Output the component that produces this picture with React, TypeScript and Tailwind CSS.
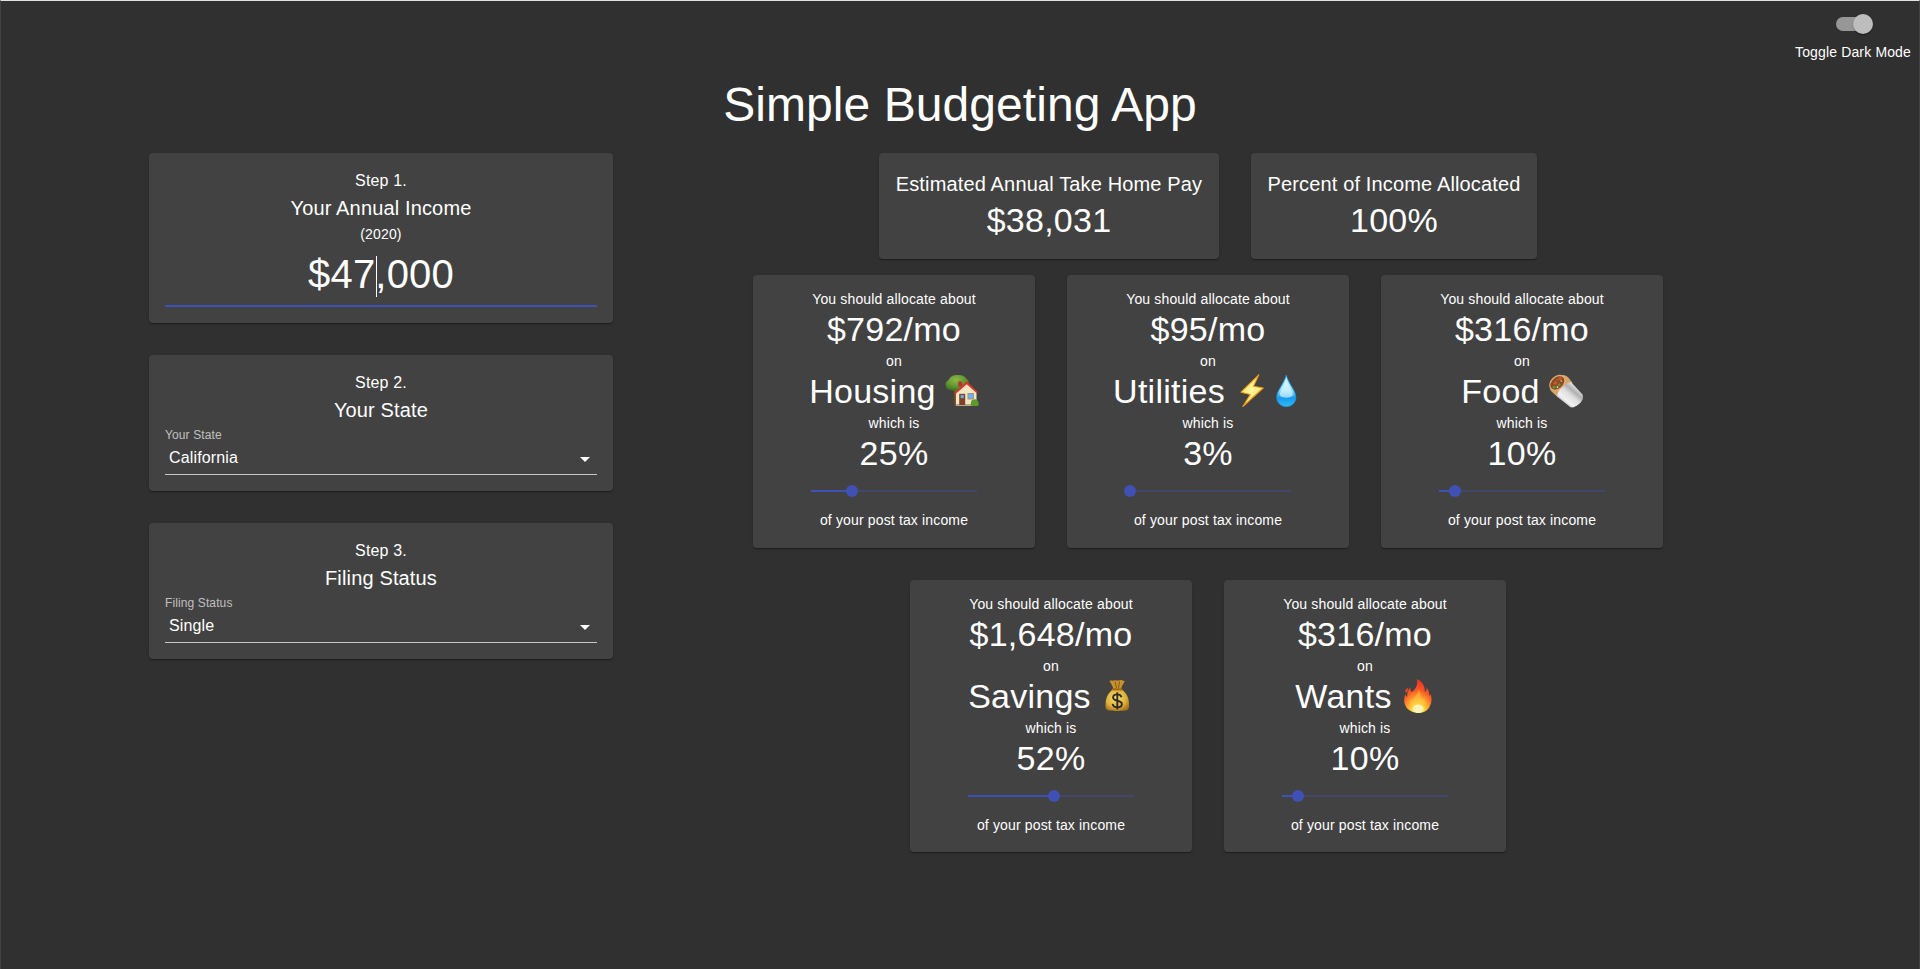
import type { ReactNode } from "react";

const card =
  "rounded bg-[#424242] shadow-[0_2px_1px_-1px_rgba(0,0,0,0.2),0_1px_1px_0_rgba(0,0,0,0.14),0_1px_3px_0_rgba(0,0,0,0.12)]";

const emojiClass = "ml-[9px] h-[34px] w-[34px] shrink-0";

function House() {
  return (
    <svg viewBox="0 0 34 34" className={emojiClass}>
      <defs>
        <radialGradient id="tree" cx="0.45" cy="0.3" r="0.7">
          <stop offset="0" stopColor="#8fb84a" />
          <stop offset="0.6" stopColor="#5f9430" />
          <stop offset="1" stopColor="#3b6b1c" />
        </radialGradient>
      </defs>
      <path d="M9 15h3.5v17H9.5z" fill="#7a5526" />
      <path d="M.6 11C.4 8 2.500 7 4 5.200 5.500 2 9 .8 12 1c4-.5 8 .8 9.600 4 2.400 1 2.600 4 1.600 6l-11 5.500C10 18 8 17 6.500 16 3 16.500.8 14 .6 11z" fill="url(#tree)" />
      <path d="M13.300 7.500h3.800v5h-3.800z" fill="#b5362c" />
      <path d="M11 17.500 21.700 8.500 31.500 17.500V31.500H11z" fill="#f4e6c3" />
      <path d="M11 30h20v2H11z" fill="#b9a98c" />
      <path d="M9.500 18.800 21.700 7.300 33 18.300l-1.200 1L21.700 10.200 10.600 20z" fill="#d8322b" />
      <path d="M14.200 19.800h6v11.200h-6z" fill="#7d4228" />
      <path d="M15.600 21h3.200v3.200h-3.200z" fill="#63aee8" />
      <path d="M22.500 19h6.500v6.500h-6.500z" fill="#b98b5e" />
      <path d="M23.300 19.800h5v4.700h-5z" fill="#69b5f2" />
      <path d="M26 29c-.5-2 1.200-3.500 2.500-3.300 1.800-1.200 4.300 0 4.500 2 1.500 1.500.8 4-.8 4.300h-5c-1.500-.3-2-1.800-1.200-3z" fill="#5f9a2c" />
    </svg>
  );
}

function Bolt() {
  return (
    <svg viewBox="0 0 34 34" className="ml-[10px] h-[34px] w-[34px] shrink-0">
      <defs>
        <linearGradient id="bolt" x1="0" y1="0" x2="1" y2="1">
          <stop offset="0" stopColor="#ffe14a" />
          <stop offset="0.5" stopColor="#fff6a0" />
          <stop offset="1" stopColor="#ffc928" />
        </linearGradient>
      </defs>
      <path d="M23.800 .8 6 18.200 15.300 20.500 7.800 32.500 28.200 14 18.500 12.300z" fill="url(#bolt)" stroke="#f39a12" strokeWidth="1.100" strokeLinejoin="round" />
    </svg>
  );
}

function Drop() {
  return (
    <svg viewBox="0 0 34 34" className="h-[34px] w-[34px] shrink-0">
      <defs>
        <linearGradient id="drop" x1="0" y1="0" x2="0" y2="1">
          <stop offset="0" stopColor="#d6f6ff" />
          <stop offset="0.5" stopColor="#8edcfb" />
          <stop offset="0.72" stopColor="#1698ee" />
          <stop offset="1" stopColor="#2fbcf8" />
        </linearGradient>
      </defs>
      <path d="M17.300 1.200C15.500 9 7.800 16.500 7.800 23.300c0 5.300 4.200 9.300 9.500 9.300s9.500-4 9.500-9.300C26.800 16.500 19 9 17.300 1.200z" fill="url(#drop)" stroke="#14a0ee" strokeWidth=".8" />
      <path d="M17.300 5c-1.500 6-6 11-6.500 16 1 3.500 12 3.500 13 0C23.300 16 18.800 11 17.300 5z" fill="#e6faff" opacity=".6" />
    </svg>
  );
}

function Burrito() {
  return (
    <svg viewBox="0 0 34 34" className={emojiClass}>
      <defs>
        <linearGradient id="foil" x1="0.2" y1="0.9" x2="0.8" y2="0.2">
          <stop offset="0" stopColor="#a2a2a2" />
          <stop offset="0.25" stopColor="#f1f1f1" />
          <stop offset="0.55" stopColor="#dedede" />
          <stop offset="0.75" stopColor="#b0b0b0" />
          <stop offset="1" stopColor="#e6e6e6" />
        </linearGradient>
      </defs>
      <path d="M1 12 12 1.500c2-1.200 5-.3 7.500 2.200l4 5L8.500 23 3 18c-2-2-2.500-4-2-6z" fill="#d8a66b" />
      <path d="M22 8 33.500 20.500c1.500 4-1 7.500-3.500 9.500s-5.500 4-8.500 3.300L8 22.500C8.500 16 15 9 22 8z" fill="url(#foil)" />
      <ellipse cx="8.500" cy="8.800" rx="9.300" ry="6.800" transform="rotate(-43 8.500 8.800)" fill="#e0ad72" />
      <ellipse cx="8.300" cy="8.900" rx="7.900" ry="5.500" transform="rotate(-43 8.300 8.900)" fill="#8c4a24" />
      <path d="M4 10l2-3 2.500 1-1.500 3zM9 4l3-1 1 2-2.500 1.500z" fill="#d2552f" />
      <path d="M3 13l2-1.500L7 13l-2 2zM8.500 10.500l2-1.500 1.500 2-2 1zM6.800 5.200 9 5l-.5 2z" fill="#5d9c35" />
      <path d="M7.500 12.500l1.500-.5.500 1.500-1.500.5zM11 6.800l1.800-.6.200 1.800z" fill="#efe3d0" />
    </svg>
  );
}

function MoneyBag() {
  return (
    <svg viewBox="0 0 34 34" className={emojiClass}>
      <defs>
        <radialGradient id="bag" cx="0.45" cy="0.4" r="0.65">
          <stop offset="0" stopColor="#f9df6d" />
          <stop offset="0.65" stopColor="#dfb03a" />
          <stop offset="1" stopColor="#a87518" />
        </radialGradient>
      </defs>
      <path d="M9.500 2c1.500-1 2.500.2 4-.5 2-.8 3.500.3 5 0s2.500-.8 4 0c1 .3 2 .2 2.200 1-1.500 2.300-3 4.500-3.700 8h-7.500C13 7.500 11 4.500 9.500 2z" fill="#c8912c" />
      <path d="M15 2.500 16.500 9M19.500 2.500 18.500 9" stroke="#8a5a14" strokeWidth="1" />
      <path d="M13 10.500h8.500c4.500 2.500 7.500 8 7.500 14 0 3.500.5 5-2 6.500-2 1.200-17 1.200-19.500 0-2.300-1.200-2-3-1.900-6.500.2-6 3-11.500 7.400-14z" fill="url(#bag)" />
      <rect x="12" y="9.300" width="10.500" height="2.200" rx="1.100" fill="#a26b18" />
      <path d="M21.500 18.200c-.6-1.900-2.200-2.800-4.200-2.800-2.400 0-4.200 1.200-4.200 3.200 0 4.300 8.800 2 8.800 6.400 0 2.100-1.900 3.300-4.500 3.300-2.500 0-4.400-1.200-4.800-3.400M17.300 13.200v17.200" fill="none" stroke="#2f2a2b" strokeWidth="1.900" />
    </svg>
  );
}

function Fire() {
  return (
    <svg viewBox="0 0 34 34" className={emojiClass}>
      <defs>
        <radialGradient id="fire" cx="0.5" cy="0.95" r="0.85">
          <stop offset="0" stopColor="#fff78f" />
          <stop offset="0.25" stopColor="#ffdc40" />
          <stop offset="0.5" stopColor="#ff9a2c" />
          <stop offset="0.75" stopColor="#fb5425" />
          <stop offset="1" stopColor="#ef3b22" />
        </radialGradient>
      </defs>
      <path d="M15.800 0c5 2.200 8.500 7 8 13 1.500-.6 2-2.500 1.800-4.500 2.500 3 2.700 6 2.900 8.500.6-.5 1-1.300 1-2.200 1.500 3.500 1.500 8.500-.5 12.200C27 31.500 22.500 34 17.500 34S7 31.500 4.800 27.500C2.500 23.500 2.800 19 4.500 15c.3 1.500 1 2.500 1.800 3-.5-4 .7-7.300 3.200-9.500-.3 2 .3 3.500 1.300 4.500C14 11 17.500 6 15.800 0z" fill="url(#fire)" />
      <path d="M7 8.200c-1 1.300-2.600 2-2.800 3.700 0 .8.600 1.400 1.300 1.300C7.500 12.500 6.500 10 7 8.200z" fill="#f2452a" />
      <path d="M17.300 10c3.500 4.500 1.200 7.500 4 11 1-.4 1.500-1.400 1.600-2.600 2 4.500 1.500 9.500-1.600 12.600-2.500 2-6.500 2-9 0-3.500-3-4-7.500-2-11 .3 1.500 1 2.500 2 2.800C11.500 18 18 16 17.300 10z" fill="#ffc840" opacity=".5" />
      <ellipse cx="17" cy="29.500" rx="5.500" ry="4" fill="#fffbd0" opacity=".8" />
    </svg>
  );
}

function StepCard({ step, title, children }: { step: string; title: string; children: ReactNode }) {
  return (
    <section className={`${card} flex w-[464px] flex-col items-center p-4`}>
      <p className="text-base leading-6 tracking-[0.00938em]">{step}</p>
      <h2 className="mb-px text-xl leading-[30px] tracking-[0.0075em]">{title}</h2>
      {children}
    </section>
  );
}

function Select({ label, value }: { label: string; value: string }) {
  return (
    <div className="flex h-[49px] w-full flex-col border-b border-[#c6c6c6]">
      <span className="pt-px text-xs leading-4 tracking-[0.00938em] text-[#c0c0c0]">{label}</span>
      <div className="flex items-center justify-between pl-1">
        <span className="pt-0.5 text-base leading-[26px] tracking-[0.00938em]">{value}</span>
        <svg viewBox="0 0 24 24" className="mt-1 h-6 w-6" fill="#fff">
          <path d="M7 10l5 5 5-5z" />
        </svg>
      </div>
    </div>
  );
}

function Stat({ title, value, width }: { title: string; value: string; width: string }) {
  return (
    <section className={`${card} ${width} flex h-[106px] flex-col items-center pt-4`}>
      <h2 className="text-xl leading-[30px] tracking-[0.0075em] whitespace-nowrap">{title}</h2>
      <p className="text-[34px] leading-[42px] tracking-[0.00735em]">{value}</p>
    </section>
  );
}

const small = "text-sm leading-5 tracking-[0.01071em]";
const big = "mb-0.5 flex h-10 items-center text-[34px] leading-10 tracking-[0.00735em]";

function Allocation({ amount, name, icon, percent }: { amount: string; name: string; icon: ReactNode; percent: number }) {
  return (
    <section className={`${card} flex h-[272.6px] w-[282px] flex-col items-center pt-[14px]`}>
      <p className={small}>You should allocate about</p>
      <p className={big}>{amount}</p>
      <p className={small}>on</p>
      <div className={big}>
        <span>{name}</span>
        {icon}
      </div>
      <p className={small}>which is</p>
      <p className={big}>{percent}%</p>
      <div className="mt-[10px] flex h-3 w-[166px] items-center">
        <div className="relative h-0.5 w-full bg-[#424769]">
          <div className="h-0.5 bg-[#3f51b5]" style={{ width: `${percent}%` }} />
          <div className="absolute -top-[5px] -ml-[6.3px] h-3 w-3 rounded-full bg-[#3f51b5]" style={{ left: `${percent}%` }} />
        </div>
      </div>
      <p className={`${small} mt-[13px]`}>of your post tax income</p>
    </section>
  );
}

export default function App() {
  return (
    <div className="flex h-[969px] w-[1920px] flex-col overflow-hidden border-x border-t border-x-[#414141] border-t-[#dfe3e2] bg-[#303030] font-['Liberation_Sans',Arial,sans-serif] text-white">
      <header className="flex h-[68px] justify-end pr-2">
        <div className="flex flex-col items-center pt-[13px]">
          <div className="flex h-5 w-[34px] items-center">
            <div className="relative h-3.5 w-[34px] rounded-full bg-[#979797]">
              <div className="absolute -top-[3px] left-[17px] h-5 w-5 rounded-full bg-[#bdbdbd] shadow-[0_2px_1px_-1px_rgba(0,0,0,0.2),0_1px_1px_0_rgba(0,0,0,0.14),0_1px_3px_0_rgba(0,0,0,0.12)]" />
            </div>
          </div>
          <p className={`${small} mt-2`}>Toggle Dark Mode</p>
        </div>
      </header>
      <h1 className="mt-2 text-center text-5xl leading-[56px] tracking-[0.06px]">Simple Budgeting App</h1>
      <main className="mt-[20px] flex pl-[148px]">
        <div className="flex flex-col gap-8">
          <StepCard step="Step 1." title="Your Annual Income">
            <p className={small}>(2020)</p>
            <div className="flex h-[63px] w-full items-center justify-center border-b-2 border-[#3f51b5] pb-px text-[40px] leading-[58px] tracking-[0.2px]">
              <span>$47</span>
              <span className="mt-[5px] -mr-0.5 ml-px h-[41px] w-px bg-white" />
              <span>,000</span>
            </div>
          </StepCard>
          <StepCard step="Step 2." title="Your State">
            <Select label="Your State" value="California" />
          </StepCard>
          <StepCard step="Step 3." title="Filing Status">
            <Select label="Filing Status" value="Single" />
          </StepCard>
        </div>
        <div className="ml-[140px] flex w-[910px] flex-col items-center">
          <div className="flex gap-8">
            <Stat width="w-[340px]" title="Estimated Annual Take Home Pay" value="$38,031" />
            <Stat width="w-[286px]" title="Percent of Income Allocated" value="100%" />
          </div>
          <div className="mt-4 flex gap-8">
            <Allocation amount="$792/mo" name="Housing" icon={<House />} percent={25} />
            <Allocation amount="$95/mo" name="Utilities" icon={<><Bolt /><Drop /></>} percent={3} />
            <Allocation amount="$316/mo" name="Food" icon={<Burrito />} percent={10} />
          </div>
          <div className="mt-8 flex gap-8">
            <Allocation amount="$1,648/mo" name="Savings" icon={<MoneyBag />} percent={52} />
            <Allocation amount="$316/mo" name="Wants" icon={<Fire />} percent={10} />
          </div>
        </div>
      </main>
    </div>
  );
}
